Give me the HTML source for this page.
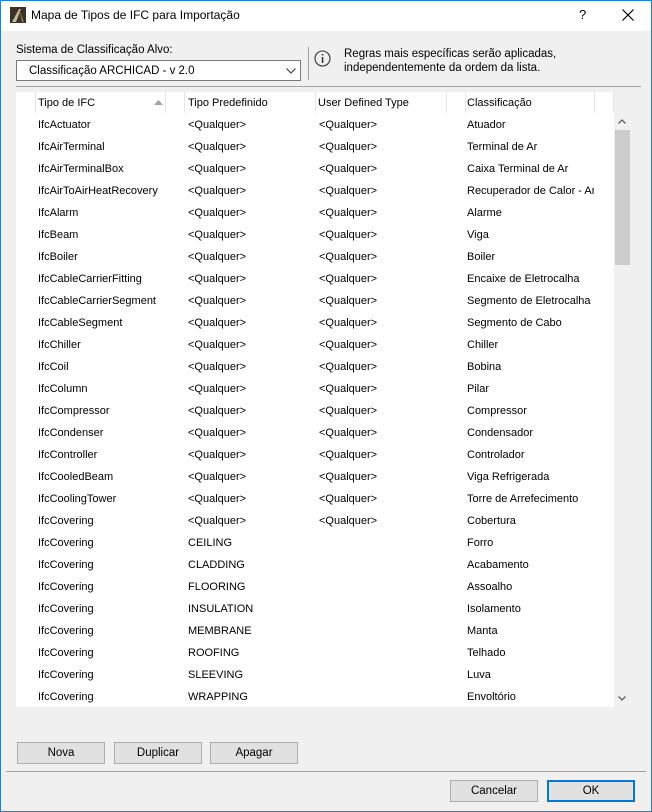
<!DOCTYPE html>
<html><head><style>
*{box-sizing:border-box;margin:0;padding:0}
body{width:652px;height:812px;background:#f0f0f0;font-family:"Liberation Sans",sans-serif;font-size:11px;color:#000;position:relative;overflow:hidden}
.win{position:absolute;left:0;top:0;width:652px;height:812px;border:1px solid #1883d7}
.abs{position:absolute}
.title{left:1px;top:1px;width:650px;height:30px;background:#fff}
.btn{position:absolute;height:22px;background:#e1e1e1;border:1px solid #adadad;text-align:center;line-height:20px;font-size:11.5px}
.row{position:absolute;left:0;height:22px;line-height:22px;white-space:nowrap}
.row span{position:absolute}
</style></head><body>
<div class="win"></div>
<div class="abs title"></div>
<svg class="abs" style="left:10px;top:7px" width="16" height="16"><rect width="16" height="16" fill="#3b3226"/><path d="M2 15 L9 2 L11 2 L6 15Z" fill="#c9b89a"/><path d="M9 2 L14 15 L12 15Z" fill="#8a7a62"/></svg>
<div class="abs" style="left:31px;top:8px;font-size:12px">Mapa de Tipos de IFC para Importação</div>
<div class="abs" style="left:579px;top:7px;font-size:13px">?</div>
<svg class="abs" style="left:622px;top:9px" width="12" height="12"><path d="M0.5 0.5L11.5 11.5M11.5 0.5L0.5 11.5" stroke="#000" stroke-width="1.2"/></svg>

<div class="abs" style="left:16px;top:44px;font-size:11.5px">Sistema de Classificação Alvo:</div>
<div class="abs" style="left:16px;top:60px;width:285px;height:21px;background:#fff;border:1px solid #7a7a7a"></div>
<div class="abs" style="left:29px;top:65px;font-size:11.5px">Classificação ARCHICAD - v 2.0</div>
<svg class="abs" style="left:286px;top:68px" width="10" height="6"><path d="M0.5 0.5L5 5L9.5 0.5" stroke="#333" fill="none"/></svg>
<div class="abs" style="left:308px;top:47px;width:1px;height:33px;background:#a0a0a0"></div>
<svg class="abs" style="left:314px;top:50px" width="17" height="17"><circle cx="8.5" cy="8.5" r="7.5" stroke="#333" fill="none" stroke-width="1.1"/><rect x="7.8" y="7" width="1.5" height="6" fill="#333"/><rect x="7.8" y="4" width="1.5" height="1.5" fill="#333"/></svg>
<div class="abs" style="left:344px;top:47px;font-size:11.5px;line-height:14px">Regras mais específicas serão aplicadas,<br>independentemente da ordem da lista.</div>
<div class="abs" style="left:16px;top:86px;width:625px;height:1px;background:#a0a0a0"></div>

<div class="abs" style="left:16px;top:92px;width:598px;height:615px;background:#fff"></div>
<div class="abs" style="left:35px;top:92px;width:1px;height:21px;background:#e5e5e5"></div>
<div class="abs" style="left:165px;top:92px;width:1px;height:21px;background:#e5e5e5"></div>
<div class="abs" style="left:184px;top:92px;width:1px;height:21px;background:#e5e5e5"></div>
<div class="abs" style="left:315px;top:92px;width:1px;height:21px;background:#e5e5e5"></div>
<div class="abs" style="left:446px;top:92px;width:1px;height:21px;background:#e5e5e5"></div>
<div class="abs" style="left:465px;top:92px;width:1px;height:21px;background:#e5e5e5"></div>
<div class="abs" style="left:594px;top:92px;width:1px;height:21px;background:#e5e5e5"></div>
<div class="abs" style="left:613px;top:92px;width:1px;height:21px;background:#e5e5e5"></div>
<svg class="abs" style="left:154px;top:100px" width="9" height="5"><path d="M0 5L4.5 0L9 5Z" fill="#a0a0a0"/></svg>
<div class="abs" style="left:38px;top:97px">Tipo de IFC</div>
<div class="abs" style="left:188px;top:97px">Tipo Predefinido</div>
<div class="abs" style="left:318px;top:97px">User Defined Type</div>
<div class="abs" style="left:467px;top:97px">Classificação</div>

<div class="abs" style="left:614px;top:113px;width:17px;height:594px;background:#f0f0f0"></div>
<div class="abs" style="left:615px;top:130px;width:15px;height:135px;background:#cdcdcd"></div>
<svg class="abs" style="left:618px;top:119px" width="8" height="5"><path d="M0.5 4.5L4 1L7.5 4.5" stroke="#606060" fill="none" stroke-width="1.3"/></svg>
<svg class="abs" style="left:618px;top:696px" width="8" height="5"><path d="M0.5 0.5L4 4L7.5 0.5" stroke="#606060" fill="none" stroke-width="1.3"/></svg>

<div class="abs" style="left:0;top:114px;width:594px;height:593px;overflow:hidden">
<div class="row" style="top:0"><span style="left:38px">IfcActuator</span><span style="left:188px">&lt;Qualquer&gt;</span><span style="left:319px">&lt;Qualquer&gt;</span><span style="left:467px">Atuador</span></div>
<div class="row" style="top:22px"><span style="left:38px">IfcAirTerminal</span><span style="left:188px">&lt;Qualquer&gt;</span><span style="left:319px">&lt;Qualquer&gt;</span><span style="left:467px">Terminal de Ar</span></div>
<div class="row" style="top:44px"><span style="left:38px">IfcAirTerminalBox</span><span style="left:188px">&lt;Qualquer&gt;</span><span style="left:319px">&lt;Qualquer&gt;</span><span style="left:467px">Caixa Terminal de Ar</span></div>
<div class="row" style="top:66px"><span style="left:38px">IfcAirToAirHeatRecovery</span><span style="left:188px">&lt;Qualquer&gt;</span><span style="left:319px">&lt;Qualquer&gt;</span><span style="left:467px">Recuperador de Calor - Ar</span></div>
<div class="row" style="top:88px"><span style="left:38px">IfcAlarm</span><span style="left:188px">&lt;Qualquer&gt;</span><span style="left:319px">&lt;Qualquer&gt;</span><span style="left:467px">Alarme</span></div>
<div class="row" style="top:110px"><span style="left:38px">IfcBeam</span><span style="left:188px">&lt;Qualquer&gt;</span><span style="left:319px">&lt;Qualquer&gt;</span><span style="left:467px">Viga</span></div>
<div class="row" style="top:132px"><span style="left:38px">IfcBoiler</span><span style="left:188px">&lt;Qualquer&gt;</span><span style="left:319px">&lt;Qualquer&gt;</span><span style="left:467px">Boiler</span></div>
<div class="row" style="top:154px"><span style="left:38px">IfcCableCarrierFitting</span><span style="left:188px">&lt;Qualquer&gt;</span><span style="left:319px">&lt;Qualquer&gt;</span><span style="left:467px">Encaixe de Eletrocalha</span></div>
<div class="row" style="top:176px"><span style="left:38px">IfcCableCarrierSegment</span><span style="left:188px">&lt;Qualquer&gt;</span><span style="left:319px">&lt;Qualquer&gt;</span><span style="left:467px">Segmento de Eletrocalha</span></div>
<div class="row" style="top:198px"><span style="left:38px">IfcCableSegment</span><span style="left:188px">&lt;Qualquer&gt;</span><span style="left:319px">&lt;Qualquer&gt;</span><span style="left:467px">Segmento de Cabo</span></div>
<div class="row" style="top:220px"><span style="left:38px">IfcChiller</span><span style="left:188px">&lt;Qualquer&gt;</span><span style="left:319px">&lt;Qualquer&gt;</span><span style="left:467px">Chiller</span></div>
<div class="row" style="top:242px"><span style="left:38px">IfcCoil</span><span style="left:188px">&lt;Qualquer&gt;</span><span style="left:319px">&lt;Qualquer&gt;</span><span style="left:467px">Bobina</span></div>
<div class="row" style="top:264px"><span style="left:38px">IfcColumn</span><span style="left:188px">&lt;Qualquer&gt;</span><span style="left:319px">&lt;Qualquer&gt;</span><span style="left:467px">Pilar</span></div>
<div class="row" style="top:286px"><span style="left:38px">IfcCompressor</span><span style="left:188px">&lt;Qualquer&gt;</span><span style="left:319px">&lt;Qualquer&gt;</span><span style="left:467px">Compressor</span></div>
<div class="row" style="top:308px"><span style="left:38px">IfcCondenser</span><span style="left:188px">&lt;Qualquer&gt;</span><span style="left:319px">&lt;Qualquer&gt;</span><span style="left:467px">Condensador</span></div>
<div class="row" style="top:330px"><span style="left:38px">IfcController</span><span style="left:188px">&lt;Qualquer&gt;</span><span style="left:319px">&lt;Qualquer&gt;</span><span style="left:467px">Controlador</span></div>
<div class="row" style="top:352px"><span style="left:38px">IfcCooledBeam</span><span style="left:188px">&lt;Qualquer&gt;</span><span style="left:319px">&lt;Qualquer&gt;</span><span style="left:467px">Viga Refrigerada</span></div>
<div class="row" style="top:374px"><span style="left:38px">IfcCoolingTower</span><span style="left:188px">&lt;Qualquer&gt;</span><span style="left:319px">&lt;Qualquer&gt;</span><span style="left:467px">Torre de Arrefecimento</span></div>
<div class="row" style="top:396px"><span style="left:38px">IfcCovering</span><span style="left:188px">&lt;Qualquer&gt;</span><span style="left:319px">&lt;Qualquer&gt;</span><span style="left:467px">Cobertura</span></div>
<div class="row" style="top:418px"><span style="left:38px">IfcCovering</span><span style="left:188px">CEILING</span><span style="left:467px">Forro</span></div>
<div class="row" style="top:440px"><span style="left:38px">IfcCovering</span><span style="left:188px">CLADDING</span><span style="left:467px">Acabamento</span></div>
<div class="row" style="top:462px"><span style="left:38px">IfcCovering</span><span style="left:188px">FLOORING</span><span style="left:467px">Assoalho</span></div>
<div class="row" style="top:484px"><span style="left:38px">IfcCovering</span><span style="left:188px">INSULATION</span><span style="left:467px">Isolamento</span></div>
<div class="row" style="top:506px"><span style="left:38px">IfcCovering</span><span style="left:188px">MEMBRANE</span><span style="left:467px">Manta</span></div>
<div class="row" style="top:528px"><span style="left:38px">IfcCovering</span><span style="left:188px">ROOFING</span><span style="left:467px">Telhado</span></div>
<div class="row" style="top:550px"><span style="left:38px">IfcCovering</span><span style="left:188px">SLEEVING</span><span style="left:467px">Luva</span></div>
<div class="row" style="top:572px"><span style="left:38px">IfcCovering</span><span style="left:188px">WRAPPING</span><span style="left:467px">Envoltório</span></div>
</div>

<div class="btn" style="left:17px;top:742px;width:88px">Nova</div>
<div class="btn" style="left:114px;top:742px;width:88px">Duplicar</div>
<div class="btn" style="left:210px;top:742px;width:88px">Apagar</div>
<div class="abs" style="left:6px;top:771px;width:640px;height:1px;background:#a0a0a0"></div>
<div class="btn" style="left:450px;top:780px;width:88px">Cancelar</div>
<div class="btn" style="left:547px;top:780px;width:88px;border:2px solid #0078d7;line-height:18px">OK</div>
</body></html>
